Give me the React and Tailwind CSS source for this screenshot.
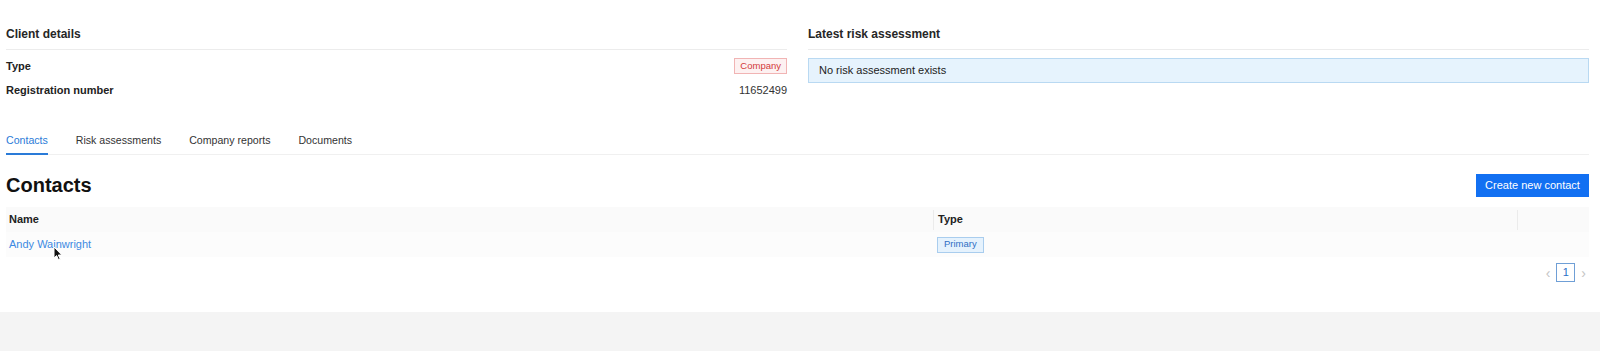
import React from "react";

const TABS = ["Contacts", "Risk assessments", "Company reports", "Documents"];

function Cursor() {
  return (
    <svg
      className="absolute left-[47px] top-[14px]"
      width="10"
      height="15"
      viewBox="0 0 10 15"
    >
      <path
        d="M1 1 L1 12 L3.6 9.6 L5.6 14 L7.2 13.2 L5.3 9 L8.8 9 Z"
        fill="#111"
        stroke="#fff"
        strokeWidth="1"
        strokeLinejoin="round"
      />
    </svg>
  );
}

function SectionHeader({ children }) {
  return (
    <div className="pb-[7px] border-b border-[#ececec] text-[12px] leading-[16px] font-semibold text-[#262626]">
      {children}
    </div>
  );
}

export default function App() {
  return (
    <div
      className="w-full h-[351px] bg-white flex flex-col text-[#222]"
      style={{ fontFamily: '"Liberation Sans", Arial, sans-serif' }}
    >
      <div className="h-[312px] pl-[6px] pr-[11px] pt-[26px]">
        {/* top: details + risk */}
        <div className="grid grid-cols-2 gap-[21px]">
          <div>
            <SectionHeader>Client details</SectionHeader>
            <div className="pt-[4px]">
              <div className="h-6 flex items-center justify-between">
                <span className="text-[11px] font-bold">Type</span>
                <span className="h-4 px-[5px] flex items-center border border-[#f1b4b4] bg-[#fdf1f1] text-[#d23a3a] text-[9.5px]">
                  Company
                </span>
              </div>
              <div className="h-6 flex items-center justify-between">
                <span className="text-[11px] font-bold">Registration number</span>
                <span className="text-[11px] text-[#333]">11652499</span>
              </div>
            </div>
          </div>
          <div>
            <SectionHeader>Latest risk assessment</SectionHeader>
            <div className="mt-2 h-[25px] px-[10px] flex items-center bg-[#e6f3fd] border border-[#b9d9f2] text-[11px] text-[#222]">
              No risk assessment exists
            </div>
          </div>
        </div>

        {/* tabs */}
        <div className="mt-[31px] flex gap-[28px] border-b border-[#f0f0f0]">
          {TABS.map((t, i) => (
            <div
              key={t}
              className={
                i === 0
                  ? "-mb-px pb-[6px] border-b-2 border-[#2a7bd8] text-[10.6px] leading-[14px] text-[#2a7bd8]"
                  : "-mb-px pb-[6px] border-b-2 border-transparent text-[10.6px] leading-[14px] text-[#333]"
              }
            >
              {t}
            </div>
          ))}
        </div>

        {/* contacts heading */}
        <div className="mt-[18px] flex items-center justify-between">
          <h1 className="text-[20px] leading-[24px] font-bold text-[#111]">Contacts</h1>
          <button className="h-[23px] w-[113px] bg-[#1270f2] text-white text-[11px] font-medium">
            Create new contact
          </button>
        </div>

        {/* table */}
        <div className="mt-[10px]">
          <div className="grid grid-cols-[927px_584px_1fr] h-[25px] bg-[#fafafa] text-[11px] font-bold">
            <div className="flex items-center pl-[3px]">Name</div>
            <div className="flex items-center">
              <span className="h-[20px] border-l border-[#ebebeb]" />
              <span className="pl-[4px]">Type</span>
            </div>
            <div className="flex items-center">
              <span className="h-[20px] border-l border-[#ebebeb]" />
            </div>
          </div>
          <div className="relative grid grid-cols-[927px_584px_1fr] h-[25px] bg-[#fcfcfc] text-[11px]">
            <div className="flex items-center pl-[3px] text-[#3d8ae2]">Andy Wainwright</div>
            <div className="flex items-center pl-[4px]">
              <span className="h-4 px-[6px] flex items-center border border-[#a9cdee] bg-[#e5f2fd] text-[#2f6fc4] text-[9.5px]">
                Primary
              </span>
            </div>
            <div />
            <Cursor />
          </div>
        </div>

        {/* pagination */}
        <div className="mt-[6px] flex items-center justify-end gap-[6px] pr-[3px]">
          <span className="text-[14px] leading-none text-[#c4c4c4]">‹</span>
          <span className="w-[19px] h-[19px] flex items-center justify-center border border-[#6f9fd6] text-[11px] text-[#2a6fc8] font-medium">
            1
          </span>
          <span className="text-[14px] leading-none text-[#c4c4c4]">›</span>
        </div>
      </div>
      <div className="flex-1 bg-[#f4f4f4]" />
    </div>
  );
}
